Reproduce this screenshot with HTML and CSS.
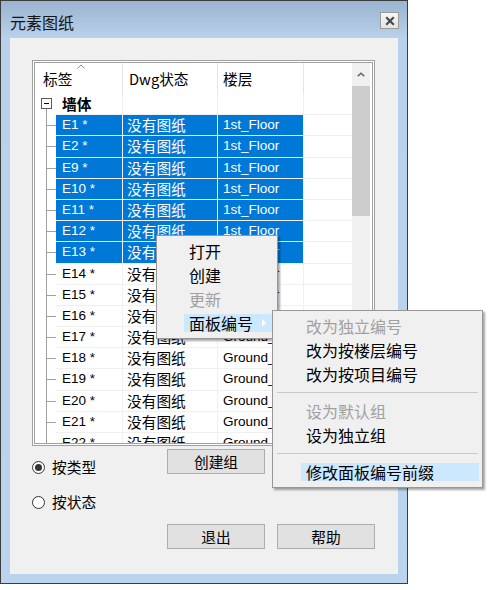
FILE: index.html
```html
<!DOCTYPE html>
<html lang="zh">
<head>
<meta charset="utf-8">
<title>元素图纸</title>
<link rel="stylesheet" href="styles.css">
</head>
<body>
<div class="window">
  <div class="titlebar">
    <span class="title">元素图纸</span>
    <div class="close"><svg width="10" height="10" viewBox="0 0 10 10"><path d="M1.2 1.2L8.8 8.8M8.8 1.2L1.2 8.8" stroke="#4a4a4a" stroke-width="2.2"/></svg></div>
  </div>
  <div class="client">
    <div class="listbox">
      <div class="listarea">
        <div class="header">
          <div class="hcell h0">标签<svg class="sort" width="8" height="5" viewBox="0 0 8 5"><path d="M0.5 4.5L4 1L7.5 4.5" fill="none" stroke="#8a8a8a" stroke-width="1"/></svg></div>
          <div class="hcell h1">Dwg状态</div>
          <div class="hcell h2">楼层</div>
          <div class="hcell h3"></div>
        </div>
        <div class="rows">
          <div class="row group"><div class="gutter"><span class="minus"></span></div><div class="cell c0"><b>墙体</b></div><div class="cell c1"></div><div class="cell c2"></div><div class="cell c3"></div></div>
          <div class="row sel"><div class="gutter"></div><div class="cell c0">E1 *</div><div class="cell c1">没有图纸</div><div class="cell c2">1st_Floor</div><div class="cell c3"></div></div>
          <div class="row sel"><div class="gutter"></div><div class="cell c0">E2 *</div><div class="cell c1">没有图纸</div><div class="cell c2">1st_Floor</div><div class="cell c3"></div></div>
          <div class="row sel"><div class="gutter"></div><div class="cell c0">E9 *</div><div class="cell c1">没有图纸</div><div class="cell c2">1st_Floor</div><div class="cell c3"></div></div>
          <div class="row sel"><div class="gutter"></div><div class="cell c0">E10 *</div><div class="cell c1">没有图纸</div><div class="cell c2">1st_Floor</div><div class="cell c3"></div></div>
          <div class="row sel"><div class="gutter"></div><div class="cell c0">E11 *</div><div class="cell c1">没有图纸</div><div class="cell c2">1st_Floor</div><div class="cell c3"></div></div>
          <div class="row sel"><div class="gutter"></div><div class="cell c0">E12 *</div><div class="cell c1">没有图纸</div><div class="cell c2">1st_Floor</div><div class="cell c3"></div></div>
          <div class="row sel"><div class="gutter"></div><div class="cell c0">E13 *</div><div class="cell c1">没有图纸</div><div class="cell c2">1st_Floor</div><div class="cell c3"></div></div>
          <div class="row"><div class="gutter"></div><div class="cell c0">E14 *</div><div class="cell c1">没有图纸</div><div class="cell c2">1st_Floor</div><div class="cell c3"></div></div>
          <div class="row"><div class="gutter"></div><div class="cell c0">E15 *</div><div class="cell c1">没有图纸</div><div class="cell c2">1st_Floor</div><div class="cell c3"></div></div>
          <div class="row"><div class="gutter"></div><div class="cell c0">E16 *</div><div class="cell c1">没有图纸</div><div class="cell c2">1st_Floor</div><div class="cell c3"></div></div>
          <div class="row"><div class="gutter"></div><div class="cell c0">E17 *</div><div class="cell c1">没有图纸</div><div class="cell c2">Ground_Floor</div><div class="cell c3"></div></div>
          <div class="row"><div class="gutter"></div><div class="cell c0">E18 *</div><div class="cell c1">没有图纸</div><div class="cell c2">Ground_Floor</div><div class="cell c3"></div></div>
          <div class="row"><div class="gutter"></div><div class="cell c0">E19 *</div><div class="cell c1">没有图纸</div><div class="cell c2">Ground_Floor</div><div class="cell c3"></div></div>
          <div class="row"><div class="gutter"></div><div class="cell c0">E20 *</div><div class="cell c1">没有图纸</div><div class="cell c2">Ground_Floor</div><div class="cell c3"></div></div>
          <div class="row"><div class="gutter"></div><div class="cell c0">E21 *</div><div class="cell c1">没有图纸</div><div class="cell c2">Ground_Floor</div><div class="cell c3"></div></div>
          <div class="row"><div class="gutter"></div><div class="cell c0">E22 *</div><div class="cell c1">没有图纸</div><div class="cell c2">Ground_Floor</div><div class="cell c3"></div></div>
        </div>
      </div>
      <div class="scrollbar">
        <div class="sb-up"><svg width="8" height="5" viewBox="0 0 8 5"><path d="M0.7 4.3L4 1.2L7.3 4.3" fill="none" stroke="#606060" stroke-width="1.5"/></svg></div>
        <div class="sb-thumb"></div>
      </div>
    </div>
    <div class="controls">
      <div class="radios">
        <div class="radio"><span class="dot on"></span>按类型</div>
        <div class="radio"><span class="dot"></span>按状态</div>
      </div>
      <div class="btn b-create">创建组</div>
      <div class="btn b-exit">退出</div>
      <div class="btn b-help">帮助</div>
    </div>
  </div>
</div>

<div class="menu m1">
  <div class="mi">打开</div>
  <div class="mi">创建</div>
  <div class="mi dis">更新</div>
  <div class="mi hot">面板编号<span class="arrow"></span></div>
</div>

<div class="menu m2">
  <div class="mi dis">改为独立编号</div>
  <div class="mi">改为按楼层编号</div>
  <div class="mi">改为按项目编号</div>
  <div class="msep"></div>
  <div class="mi dis">设为默认组</div>
  <div class="mi">设为独立组</div>
  <div class="msep"></div>
  <div class="mi hot">修改面板编号前缀</div>
</div>
</body>
</html>
```

FILE: styles.css
```css
* { box-sizing: border-box; }

body {
  margin: 0;
  width: 490px;
  height: 590px;
  overflow: hidden;
  position: relative;
  background: #fff;
  font-family: "Noto Sans CJK SC", "Noto Sans", sans-serif;
  font-size: 14.7px;
  color: #000;
}

.window {
  width: 408px;
  height: 584px;
  border: 1px solid #3c3c3c;
  background: linear-gradient(#9bb4cf 0, #b9d1ea 37px, #bbd3ec 100%);
  padding: 0 9px 9px 9px;
  display: flex;
  flex-direction: column;
}

.titlebar {
  height: 37px;
  flex: none;
  display: flex;
  align-items: flex-start;
  justify-content: space-between;
}

.title {
  margin-top: 11px;
  font-size: 16px;
  line-height: 20px;
  color: #141414;
}

.close {
  margin-top: 11px;
  margin-right: -1px;
  width: 19px;
  height: 17px;
  border: 1px solid #9a9a9a;
  background: linear-gradient(#f6f6f6, #e4e4e4);
  display: flex;
  align-items: center;
  justify-content: center;
}

.client {
  flex: 1;
  background: #f0f0f0;
  padding: 22px 0 0 22px;
}

.listbox {
  width: 343px;
  height: 386px;
  border: 3px double #a0a0a0;
  background: #fff;
  display: flex;
  padding-right: 2px;
}

.listarea {
  flex: 1;
  display: flex;
  flex-direction: column;
  overflow: hidden;
}

.header {
  height: 31px;
  flex: none;
  display: flex;
  position: relative;
}

.hcell {
  border-right: 1px solid #e5e5e5;
  line-height: 31px;
  white-space: nowrap;
}

.h0 { width: 88px; padding-left: 8px; position: relative; }
.h1 { width: 95px; padding-left: 6px; }
.h2 { width: 86px; padding-left: 5px; }
.h3 { flex: 1; border-right: none; }

.sort {
  position: absolute;
  left: 42px;
  top: 1px;
}

.rows {
  flex: 1;
  overflow: hidden;
}

.row {
  display: flex;
  height: 21.2px;
}

.gutter {
  width: 21px;
  flex: none;
  position: relative;
}

.gutter::before {
  content: "";
  position: absolute;
  left: 11px;
  top: 0;
  bottom: 0;
  width: 1px;
  background: #a0a0a0;
}

.gutter::after {
  content: "";
  position: absolute;
  left: 11px;
  width: 10px;
  top: 10px;
  height: 1px;
  background: #a0a0a0;
}

.group .gutter::before { top: 15px; }
.group .gutter::after { display: none; }

.minus {
  position: absolute;
  left: 6px;
  top: 4px;
  width: 11px;
  height: 11px;
  border: 1px solid #5a5a5a;
  background: #fff;
}

.minus::after {
  content: "";
  position: absolute;
  left: 2px;
  right: 2px;
  top: 4px;
  height: 1px;
  background: #000;
}

.cell {
  border-right: 1px solid #f0f0f0;
  border-bottom: 1px solid #f0f0f0;
  line-height: 20px;
  white-space: nowrap;
  overflow: hidden;
}

.c0 { width: 67px; padding-left: 6px; }
.c1 { width: 95px; padding-left: 4px; }
.c2 { width: 86px; padding-left: 5px; }
.c3 { flex: 1; border-right: none; }

.c0, .c2 {
  font-family: "Liberation Sans", "Noto Sans CJK SC", sans-serif;
  font-size: 13.5px;
}

.group b {
  font-family: "Noto Sans CJK SC", sans-serif;
  font-size: 14.7px;
  font-weight: bold;
}

.sel .c0, .sel .c1, .sel .c2 {
  background: #0078d7;
  color: #fff;
}

.scrollbar {
  width: 18px;
  flex: none;
  background: #f0f0f0;
}

.sb-up {
  height: 23px;
  display: flex;
  align-items: center;
  justify-content: center;
}

.sb-thumb {
  height: 130px;
  background: #cdcdcd;
}

.controls {
  display: grid;
  grid-template-columns: 123px 98px 98px;
  grid-template-rows: 25px 50px 25px;
  column-gap: 12px;
  margin-top: 3px;
}

.radios {
  grid-column: 1;
  grid-row: 1 / span 2;
  display: flex;
  flex-direction: column;
  gap: 15px;
  padding-top: 8px;
}

.radio {
  display: flex;
  align-items: center;
  gap: 7px;
  line-height: 20px;
}

.dot {
  width: 13px;
  height: 13px;
  border: 1px solid #333;
  border-radius: 50%;
  background: #fff;
  position: relative;
}

.dot.on::after {
  content: "";
  position: absolute;
  left: 2px;
  top: 2px;
  width: 7px;
  height: 7px;
  border-radius: 50%;
  background: #333;
}

.btn {
  background: #e1e1e1;
  border: 1px solid #adadad;
  text-align: center;
  line-height: 23px;
}

.b-create { grid-column: 2; grid-row: 1; }
.b-exit { grid-column: 2; grid-row: 3; }
.b-help { grid-column: 3; grid-row: 3; }

.menu {
  position: absolute;
  background: #f0f0f0;
  border: 1px solid #979797;
  box-shadow: 2px 2px 2px rgba(0, 0, 0, 0.35);
  padding: 3px 0;
  display: flex;
  flex-direction: column;
  font-size: 16px;
}

.m1 { left: 156px; top: 235px; width: 122px; }
.m2 { left: 272px; top: 310px; width: 211px; }

.mi {
  height: 18px;
  margin: 3px 3px 3px 27px;
  padding-left: 5px;
  line-height: 18px;
  white-space: nowrap;
  position: relative;
}

.m2 .mi { margin-left: 28px; }

.mi.dis { color: #a0a0a0; }
.mi.hot { background: #cce8ff; }

.arrow {
  position: absolute;
  right: 8px;
  top: 5px;
  width: 0;
  height: 0;
  border-left: 4px solid #fff;
  border-top: 4px solid transparent;
  border-bottom: 4px solid transparent;
}

.msep {
  height: 1px;
  margin: 6px 4px;
  background: #cacaca;
}
```
